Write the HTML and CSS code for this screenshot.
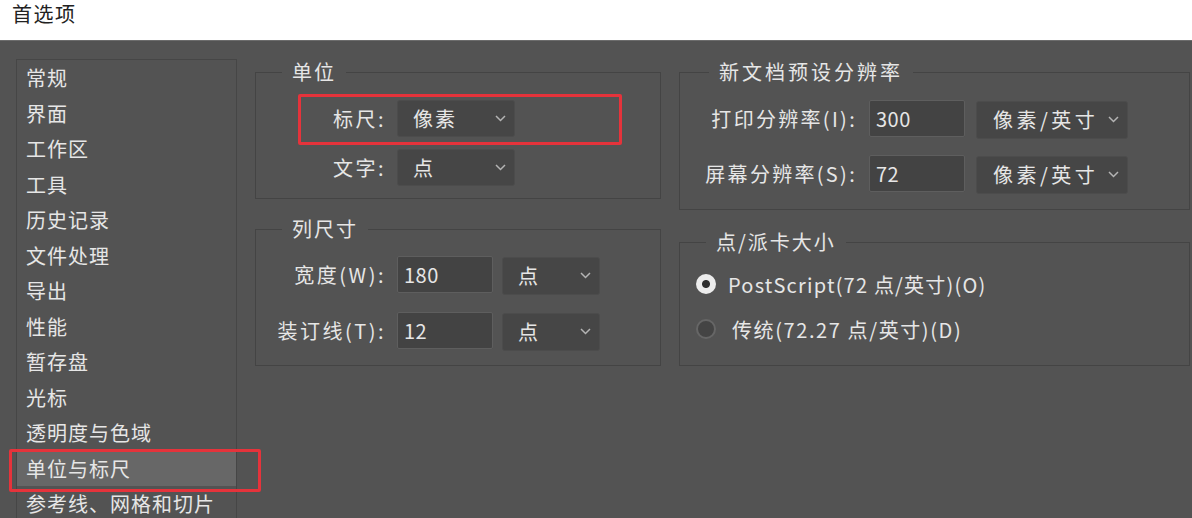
FILE: index.html
```html
<!DOCTYPE html>
<html lang="zh-CN">
  <head>
    <meta charset="UTF-8" />
    <meta name="viewport" content="width=device-width, initial-scale=1.0" />
    <title>首选项</title>
    <link rel="stylesheet" href="styles.css">
  </head>
  <body>
    <div class="titlebar">首选项</div>
    <div class="dialog">
      <ul class="nav">
        <li>常规</li>
        <li>界面</li>
        <li>工作区</li>
        <li>工具</li>
        <li>历史记录</li>
        <li>文件处理</li>
        <li>导出</li>
        <li>性能</li>
        <li>暂存盘</li>
        <li>光标</li>
        <li>透明度与色域</li>
        <li class="active">单位与标尺<span class="mark"></span></li>
        <li>参考线、网格和切片</li>
      </ul>

      <div class="col col-left">
        <fieldset class="group units">
          <legend>单位</legend>
          <div class="rows">
            <div class="row">
              <label>标尺:</label>
              <div class="select">像素<svg class="chev" viewBox="0 0 11 7"><path d="M1 1l4.5 4.5L10 1" /></svg></div>
              <span class="mark"></span>
            </div>
            <div class="row">
              <label>文字:</label>
              <div class="select">点<svg class="chev" viewBox="0 0 11 7"><path d="M1 1l4.5 4.5L10 1" /></svg></div>
            </div>
          </div>
        </fieldset>

        <fieldset class="group columns">
          <legend>列尺寸</legend>
          <div class="rows">
            <div class="row">
              <label>宽度(W):</label>
              <div class="input">180</div>
              <div class="select">点<svg class="chev" viewBox="0 0 11 7"><path d="M1 1l4.5 4.5L10 1" /></svg></div>
            </div>
            <div class="row">
              <label>装订线(T):</label>
              <div class="input">12</div>
              <div class="select">点<svg class="chev" viewBox="0 0 11 7"><path d="M1 1l4.5 4.5L10 1" /></svg></div>
            </div>
          </div>
        </fieldset>
      </div>

      <div class="col col-right">
        <fieldset class="group resolution">
          <legend>新文档预设分辨率</legend>
          <div class="rows">
            <div class="row">
              <label>打印分辨率(I):</label>
              <div class="input">300</div>
              <div class="select">像素/英寸<svg class="chev" viewBox="0 0 11 7"><path d="M1 1l4.5 4.5L10 1" /></svg></div>
            </div>
            <div class="row">
              <label>屏幕分辨率(S):</label>
              <div class="input">72</div>
              <div class="select">像素/英寸<svg class="chev" viewBox="0 0 11 7"><path d="M1 1l4.5 4.5L10 1" /></svg></div>
            </div>
          </div>
        </fieldset>

        <fieldset class="group pica">
          <legend>点/派卡大小</legend>
          <div class="rows">
            <div class="row">
              <span class="radio on"></span>
              <span>PostScript(72 点/英寸)(O)</span>
            </div>
            <div class="row">
              <span class="radio"></span>
              <span class="shift">传统(72.27 点/英寸)(D)</span>
            </div>
          </div>
        </fieldset>
      </div>
    </div>
  </body>
</html>
```

FILE: styles.css
```css
body {
  margin: 0;
  height: 518px;
  overflow: hidden;
  font-family: "Noto Sans CJK SC", "Noto Sans", sans-serif;
  background-color: #535353;
  color: #e6e6e6;
}
.titlebar {
  height: 40px;
  padding-left: 12px;
  background: #fff;
  color: #222;
  font-size: 20px;
  line-height: 28px;
  letter-spacing: 1.5px;
}
.dialog {
  display: flex;
  gap: 18px;
  padding: 18px 0 0 16px;
  border-top: 1px solid #6c6c6c;
}
.nav {
  list-style: none;
  margin: 0;
  padding: 0;
  width: 219px;
  height: 470px;
  border: 1px solid #464646;
  border-bottom: none;
  font-size: 20px;
  letter-spacing: 1px;
}
.nav li {
  position: relative;
  height: 35.5px;
  line-height: 35.5px;
  padding-left: 9px;
  white-space: nowrap;
}
.nav li.active {
  background: #676767;
}
.mark {
  position: absolute;
  border: 3px solid #e5333b;
  border-radius: 2px;
  pointer-events: none;
}
.nav .mark {
  left: -8px;
  top: -2px;
  width: 246px;
  height: 37px;
}
.col {
  display: flex;
  flex-direction: column;
  padding-top: 1px;
}
.col-left {
  width: 406px;
  gap: 18px;
}
.col-right {
  width: 511px;
  gap: 20px;
}
.group {
  margin: 0;
  padding: 0;
  min-width: 0;
  border: 1px solid #444;
}
.group legend {
  margin-left: 26px;
  padding: 0 10px;
  font-size: 20px;
  line-height: 24px;
  letter-spacing: 2px;
}
.resolution legend {
  margin-left: 29px;
  letter-spacing: 3px;
}
.rows {
  display: flex;
  flex-direction: column;
  font-size: 20px;
  letter-spacing: 2px;
}
.row {
  position: relative;
  display: flex;
  align-items: center;
}
.row label {
  width: 130px;
  margin-right: 11px;
  text-align: right;
  letter-spacing: 2.5px;
}
.select {
  display: flex;
  align-items: center;
  justify-content: space-between;
  height: 100%;
  box-sizing: border-box;
  padding: 0 8px 0 15px;
  background: #464646;
  border: 1px solid #4c4c4c;
  border-radius: 3px;
}
.chev {
  width: 11px;
  height: 7px;
  fill: none;
  stroke: #b4b4b4;
  stroke-width: 1.5;
}
.input {
  display: flex;
  align-items: center;
  height: 100%;
  box-sizing: border-box;
  padding-left: 6px;
  background: #434343;
  border: 1px solid #5e5e5e;
  border-radius: 2px;
  letter-spacing: 0.5px;
}

/* 单位 */
.units .rows {
  padding: 16px 0 12px;
  gap: 12px;
}
.units .row {
  height: 37px;
}
.units .select {
  width: 118px;
}
.units .mark {
  left: 42px;
  top: -6px;
  width: 318px;
  height: 45px;
}

/* 列尺寸 */
.columns .rows {
  padding: 14px 0 16px;
  gap: 18px;
}
.columns .row {
  height: 38px;
}
.columns .input {
  width: 96px;
  height: 37px;
  margin-right: 9px;
}
.columns .select {
  width: 98px;
  margin-top: 3px;
}

/* 新文档预设分辨率 */
.resolution .rows {
  padding: 15px 0 17px;
  gap: 17px;
}
.resolution .row {
  height: 38px;
}
.resolution label {
  width: 177px;
  margin-right: 12px;
  letter-spacing: 2.3px;
}
.resolution .input {
  width: 96px;
  height: 37px;
  margin-right: 11px;
}
.resolution .select {
  width: 152px;
  margin-top: 3px;
  padding-left: 16px;
  letter-spacing: 3.5px;
}

/* 点/派卡大小 */
.pica .rows {
  padding: 15px 0 21px;
  gap: 15px;
}
.pica .row {
  height: 30px;
  letter-spacing: 1.2px;
}
.pica .shift {
  margin-left: 4px;
  letter-spacing: 1.6px;
}
.radio {
  width: 20px;
  height: 20px;
  margin: 0 12px 0 16px;
  box-sizing: border-box;
  border-radius: 50%;
  background: #444;
  border: 2px solid #666;
}
.radio.on {
  border: none;
  background: radial-gradient(circle, #2e2e2e 0 3.5px, #ececec 4.5px);
}
```
